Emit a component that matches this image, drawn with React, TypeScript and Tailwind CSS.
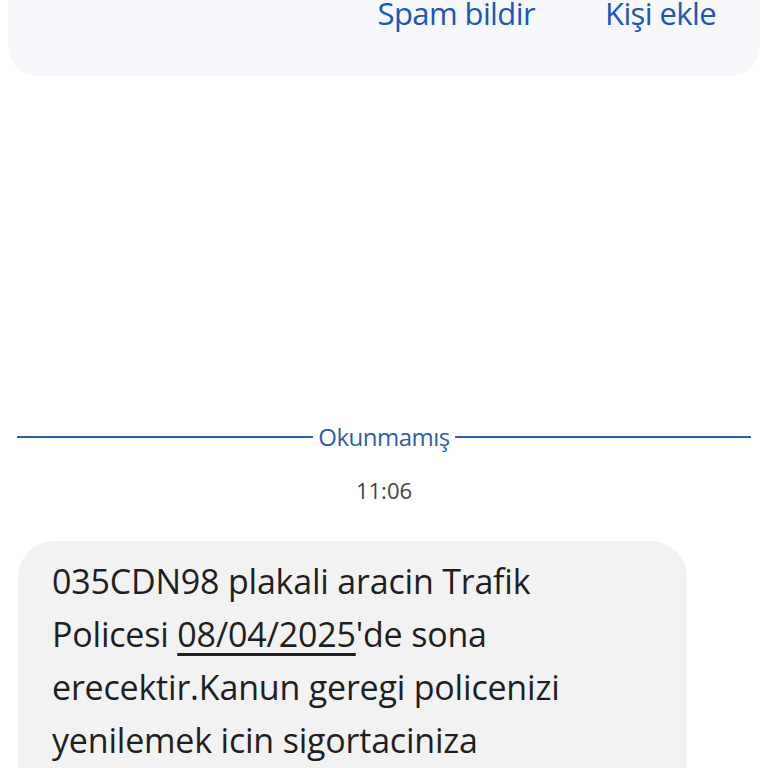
export default function App() {
  return (
    <div className="w-[768px] h-[768px] overflow-hidden bg-white relative" style={{ fontFamily: '"Open Sans", Roboto, sans-serif' }}>
      <div className="absolute left-[8px] top-[-60px] w-[752px] h-[136px] rounded-[30px] bg-[#f7f8fc]" />
      <div className="relative flex justify-end gap-[70px] pr-[52px] h-[76px] text-[31px] text-[#1b57b5] leading-[27px] tracking-[-0.6px]">
        <span>Spam bildir</span>
        <span>Kişi ekle</span>
      </div>
      <div className="h-[349px]" />
      <div className="flex items-center px-[17px] gap-[5px]">
        <div className="flex-1 h-[2px] bg-[#2b5fa8]" />
        <span className="text-[24px] text-[#2b5fa8] leading-[24px] tracking-[-0.5px]">Okunmamış</span>
        <div className="flex-1 h-[2px] bg-[#2b5fa8]" />
      </div>
      <div className="text-center text-[22px] text-[#444] mt-[30px] leading-none">11:06</div>
      <div className="ml-[18px] mt-[40px] w-[669px] rounded-[36px] bg-[#f2f2f2] pl-[34px] pr-[46px] pt-[14px] pb-[30px] text-[34px] leading-[53px] text-[#1f1f1f] tracking-[-0.2px]">
        035CDN98 plakali aracin Trafik Policesi <span className="underline decoration-[3px] underline-offset-[6px]">08/04/2025</span>'de sona erecektir.Kanun geregi policenizi yenilemek icin sigortaciniza basvurunuz.
      </div>
    </div>
  );
}
